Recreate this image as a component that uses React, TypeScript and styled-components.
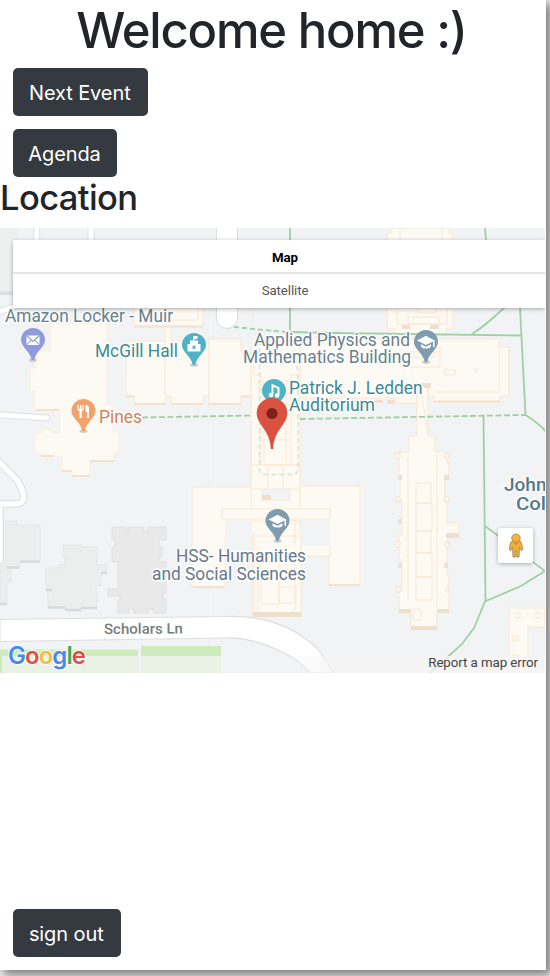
import React from 'react';
import styled, { createGlobalStyle } from 'styled-components';

const GlobalStyle = createGlobalStyle`
  * { box-sizing: border-box; }
  body { margin: 0; background: #fff; overflow: hidden; font-family: Inter, "Liberation Sans", sans-serif; color: #212529; }
`;

const Viewport = styled.div`
  height: 976px;
  width: 550px;
  overflow: hidden;
`;

const Page = styled.main`
  width: 546px;
  height: 970px;
  display: flex;
  flex-direction: column;
  align-items: flex-start;
  background: #fff;
  box-shadow: 4px 4px 10px 2px rgba(0, 0, 0, 0.5);
`;

const Title = styled.h1`
  align-self: stretch;
  margin: 0 0 6px;
  padding-right: 3px;
  text-align: center;
  white-space: nowrap;
  font-size: 49px;
  line-height: 62px;
  font-weight: 500;
  letter-spacing: -1.2px;
`;

const Subtitle = styled.h2`
  margin: 0 0 9px;
  font-size: 34.5px;
  line-height: 42px;
  font-weight: 500;
  letter-spacing: -0.6px;
`;

const Button = styled.button<{ $width: number; $gap?: number }>`
  flex: none;
  width: ${(p) => p.$width}px;
  height: 48px;
  margin: 0 0 ${(p) => p.$gap ?? 0}px 13px;
  padding: 3px 1px 0 0;
  border: 0;
  border-radius: 5px;
  background: #343a3f;
  color: #fff;
  font: 400 20px/45px Inter, "Liberation Sans", sans-serif;
  letter-spacing: -0.1px;
  text-align: center;
  white-space: nowrap;
`;

const MapFrame = styled.section`
  position: relative;
  flex: none;
  width: 545px;
  height: 445px;
  margin-bottom: 236px;
  overflow: hidden;
  background: #f2f3f5;
  font-family: Roboto, sans-serif;
`;

const Canvas = styled.svg`
  display: block;
  width: 545px;
  height: 445px;
`;

const MapTypes = styled.div`
  position: absolute;
  top: 12px;
  left: 13px;
  right: 0;
  border-radius: 2px 0 0 2px;
  box-shadow: 0 1px 4px rgba(0, 0, 0, 0.32);
`;

const MapType = styled.div<{ $active?: boolean }>`
  height: 34px;
  padding-left: 12px;
  background: #fff;
  border-bottom: ${(p) => (p.$active ? '2px solid #e6e6e6' : '0')};
  text-align: center;
  font-size: 13.3px;
  line-height: ${(p) => (p.$active ? 35 : 33)}px;
  letter-spacing: -0.1px;
  font-weight: ${(p) => (p.$active ? 700 : 400)};
  color: ${(p) => (p.$active ? '#000' : '#565656')};
`;

const PegmanButton = styled.div`
  position: absolute;
  left: 498px;
  top: 300px;
  width: 35px;
  height: 35px;
  display: grid;
  place-items: center;
  background: #fff;
  border-radius: 2px;
  box-shadow: 0 1px 4px rgba(0, 0, 0, 0.3);
`;

const Footer = styled.div`
  position: absolute;
  right: 0;
  bottom: 0;
  width: 260px;
  height: 17px;
  padding-right: 7px;
  background: linear-gradient(90deg, rgba(245, 245, 245, 0), rgba(245, 245, 245, 0.75) 50px);
  text-align: right;
  font-size: 13.3px;
  line-height: 14px;
  letter-spacing: -0.07px;
  color: #444;
  white-space: nowrap;
`;

const Label = styled.text.attrs({ lengthAdjust: 'spacingAndGlyphs' })<{ $size?: number; $weight?: number }>`
  font-family: Roboto, sans-serif;
  font-size: ${(p) => p.$size ?? 17.8}px;
  font-weight: ${(p) => p.$weight ?? 400};
  paint-order: stroke;
  stroke: #fff;
  stroke-opacity: 0.9;
  stroke-width: 3px;
  stroke-linejoin: round;
`;

const Logo = styled.text`
  font-family: Inter, sans-serif;
  font-size: 24px;
  font-weight: 600;
  letter-spacing: -0.9px;
  paint-order: stroke;
  stroke: #fff;
  stroke-opacity: 0.85;
  stroke-width: 2px;
  stroke-linejoin: round;
`;

function Pin({ x, y, color, children }: { x: number; y: number; color: string; children: React.ReactNode }) {
  return (
    <g transform={`translate(${x} ${y})`}>
      <ellipse cx="0" cy="20" rx="4" ry="1.8" fill="#777" opacity=".35" />
      <path d="M0-12A12 12 0 0 0-12 0C-12 7-3 11-1.2 20H1.2C3 11 12 7 12 0A12 12 0 0 0 0-12Z" fill={color} />
      {children}
    </g>
  );
}

const CapIcon = () => (
  <g>
    <path d="M0-6.2-9-1.5 0 3 7-.5V5H8.6V-1.5Z" fill="#fff" />
    <path d="M-5 2.2 0 4.7 5 2.2V4.5Q3.5 7 0 6.2Q-3.5 7-5 4.5Z" fill="#fff" />
  </g>
);

function Terrain() {
  return (
    <>
      <rect y="228" width="19" height="65" fill="#eeF0ef" />
      <path d="M0 293H19" stroke="#dfe0e3" strokeWidth="4" />
      <path d="M208.5 308V673" stroke="#ebecee" strokeWidth=".7" />
      <g fill="#eceeed" stroke="#e1e3e3" strokeWidth=".8">
        <path d="M5 521H17V525H40V561H20V567H7V567H0V521Z" />
        <path d="M0 569H11V582H7V604H0Z" />
        <path d="M63 545H81V547H97V565H107V573H101V586H96V592H97V608H81V610H65V607H48V591H46V568H59V565H65V557H63Z" />
        <path fill="#e9e9e9" stroke="#dcdcdc" d="M112 527H126V532H128V527H144V532H148V527H166V540H159V547H162V556H160V562H166V593H163V599H166V613H153V609H148V613H134V609H129V613H118V600H120V596H108V589H118V562H112V547H115V540H112Z" />
      </g>
      <path d="M7 567.5H19M20 561.5H40M48 607.5H65M65 610H81M81 608H97M101 573H107M46 590H52M0 604H7" stroke="#d8dbda" strokeWidth="2.4" />
      <g fill="none" strokeLinejoin="round">
        <path d="M36.7 228V244M91 228V244M-2 312 30 301M-2 414.5 47 418" stroke="#dedfe1" strokeWidth="6.8" strokeLinecap="round" />
        <path d="M227 228V318" stroke="#dedfe1" strokeWidth="22" strokeLinecap="round" />
        <path d="M-4 459 17 480Q32 505 13 504H-3M0 505V562" stroke="#dcdddf" strokeWidth="7.5" />
        <path d="M36.7 228V244M91 228V244M-2 312 30 301M-2 414.5 47 418" stroke="#fff" strokeWidth="5" strokeLinecap="round" />
        <path d="M227 228V318" stroke="#fff" strokeWidth="20" strokeLinecap="round" />
        <path d="M-4 459 17 480Q32 505 13 504H-3M0 505V562" stroke="#fff" strokeWidth="5.5" />
      </g>
      <path d="M0 619.5 225 616.5Q280 614 317 648L334 673H310L298 661Q260 637 225 638L0 641.5Z" fill="#fff" stroke="#dddedf" strokeWidth="1.2" />
      <path d="M0 650H138V673H0ZM141 646H221V673H141Z" fill="#e9f2e5" />
      <path d="M0 649.5H138V656H2V673H0ZM141 646H221V656H141Z" fill="#ceebbb" />
    </>
  );
}

function Buildings() {
  return (
    <>
      <g fill="#fdf9f3" stroke="#fbe7d1" strokeWidth="1">
        <path stroke="#fbf0df" d="M51 324H107V404H113V432H119V452H114V461H90V476H72V471H62V456H53V453H53V456H41V453H35V433H41V430H53V433H60V410H35V391H30V368H35V351H51Z" />
        <path d="M134 308H203V326H171V341H209V339H241V352H251V396H241V404H209V396H203V404H171V396H166V404H134V396H126V341H165V326H134Z" />
        <path d="M391 228H449V233H453V245H447V308H453V329H446V334H395V329H387V308H391V245H387V233H391Z" />
        <path d="M300 339H499V347H509V396H500V402H434V396H428V390H417V403H395V398H300Z" />
        <path d="M417 384H428V436H435V452H447V463H449V479H445V498H447V523H459V536H447V575H449V612H437V629H411V613H399V590H402V560H399V535H402V500H400V479H399V452H409V436H417Z" />
        <path d="M192 487H254V506H300V486H360V585H329V521H300V534H301V616H253V534H225V587H192Z" />
        <path d="M251 352H262V500H290V352H300V521H251Z" />
        <path d="M254 345H300V375H291V465H261V375H254Z" />
        <path d="M251 465H300V489H251ZM222 509H330V519H222ZM301 545H330V556H301ZM254 536H301V616H254ZM261 558H279V604H261ZM279 587H296V603H279Z" />
        <path d="M509 608H545V627H528V673H509Z" />
      </g>
      <path d="M225 520H252V546H225ZM301 520H329V545H301Z" fill="#f2f3f5" />
      <g fill="none" stroke="#fae4ce" strokeWidth=".9">
        <path d="M139 308V320H198V308M165 341V396M209 341V396M253 310V320M264 380V460M286 380V460M268 465V488M283 465V488M261 405H290M261 440H290" />
        <path d="M400 228V245M442 228V245M397 308V324H447V308M408 317H439V324H408ZM418 308V313H436V308M404 352H440V367H400M440 346V352M499 347V392H434M309 357H434V346M445 370H455V375H445ZM475 369H478V372H475Z" />
        <path d="M416 483H431V503H416ZM416 503H432V531H416ZM416 531H431V553H416ZM416 553H432V577H416ZM416 577H432V600H416ZM408 455V600M437 455V608M413 609H421V620H413ZM420 385 428 434" />
        <path d="M515 613H520V618H515ZM536 613H541V618H536ZM513 636H518V641H513ZM513 655H518V660H513Z" />
        <path d="M295 519V545M295 556V610M258 546V615" />
      </g>
      <path d="M134 326.5H203M126 396.5H134M134 404H166M171 404H203M209 404H241M241 396.5H251M35 410H60M41 456H53M62 471H72M72 476H90M90 461H114M192 587H225M329 585H360M434 401.5H500" stroke="#f5e2ce" strokeWidth="1.8" />
      <path d="M411 383H431V388H424V386H411ZM387 400H395V404H387ZM374 400H383V403H374ZM402 325H410V329H402ZM430 325H439V329H430ZM253 612H301V617H253ZM399 609H411V613H399ZM437 609H449V613H437ZM411 626H437V630H411ZM446 533H459V538H446ZM262 495H271V500H262ZM398 475H402V480H398ZM444 475H449V480H444ZM398 519H402V524H398ZM444 563H448V568H444ZM398 563H402V568H398Z" fill="#eedfcf" />
      <g fill="#fdf9f3" stroke="#f5dec4" strokeWidth=".8">
        <path d="M396 453H400V458H396ZM445 453H449V458H445ZM396 497H400V502H396ZM445 497H449V502H445ZM396 542H400V547H396ZM445 542H449V547H445ZM397 587H400V592H397ZM446 587H449V592H446Z" />
      </g>
    </>
  );
}

function Trails() {
  return (
    <g fill="none" stroke="#9fd0a4" strokeWidth="1.8">
      <path d="M290 228V330M485 228 486 240M520 308 525.5 415Q540 424 546 432M472 334Q485 326 505 307M332 333 521 335.5M290 332 340 333M483.5 416 485.5 600 474 628 462 644 430 673M485 526 545 571 521 586 486 601" />
      <path d="M142 417.5 252 415.5M300 419 525 415" strokeDasharray="6 2.5" />
      <path d="M234 327 286 332" strokeDasharray="5 3" />
      <path d="M259.5 332V470Q260 474 265 474.5H294Q298 474 298 468V372L290 332" stroke="#d9ebd8" strokeDasharray="5 3" />
    </g>
  );
}

function Places() {
  return (
    <>
      <Label x="5" y="321.500" textLength="168" fill="#68818f">Amazon Locker - Muir</Label>
      <Label x="95" y="357" textLength="83" fill="#3c8a93">McGill Hall</Label>
      <Label x="254" y="345.500" textLength="156" fill="#68818f">Applied Physics and</Label>
      <Label x="243" y="362.500" textLength="168" fill="#68818f">Mathematics Building</Label>
      <Label x="289" y="394" textLength="133.500" fill="#3c8a93">Patrick J. Ledden</Label>
      <Label x="289" y="411" textLength="86" fill="#3c8a93">Auditorium</Label>
      <Label x="99" y="423" textLength="43" fill="#d58053">Pines</Label>
      <Label x="176" y="562" textLength="130" fill="#68788a">HSS- Humanities</Label>
      <Label x="152" y="579.500" textLength="154" fill="#68788a">and Social Sciences</Label>
      <Label x="504" y="490.500" $size={19} $weight={500} fill="#55798b">John</Label>
      <Label x="516" y="510" textLength="30" $size={19} $weight={500} fill="#55798b">Col</Label>
      <Label x="104" y="634" textLength="79" $size={14.5} $weight={500} fill="#777d7d" transform="rotate(-.4 104 634)">Scholars Ln</Label>
      <Pin x={33} y={340} color="#8f9bdc">
        <path d="M-6.500-4.500H6.500V5H-6.500Z" fill="#fff" />
        <path d="M-6.500-4.500 0 1.500 6.500-4.500M-6.500 5-2 0M6.500 5 2 0" fill="none" stroke="#8f9bdc" strokeWidth="1.100" />
      </Pin>
      <Pin x={194} y={345} color="#4fb3c8">
        <path fillRule="evenodd" d="M-6.500-1H-4V-4.500H-.8V-9H3.500V-6H.5V-4.500H4V-1H6.500V6.500H-6.500ZM-1.500 3.800H1.500V.8H-1.500Z" fill="#fff" />
      </Pin>
      <Pin x={426} y={342} color="#7f9bae"><CapIcon /></Pin>
      <Pin x={83.500} y={411} color="#f2a36d">
        <path d="M-6-6V-2Q-6 0-4-.2V7H-1.700V-.2Q.3 0 .3-2V-6H-1V-2H-2.200V-6H-3.600V-2H-4.700V-6ZM2-6Q5.500-6 5.500-2V7H3.700V1H2Z" fill="#fff" />
      </Pin>
      <Pin x={277.500} y={521} color="#7f9bae"><CapIcon /></Pin>
      <Pin x={274} y={391} color="#4fb3c8">
        <path d="M-1.500 3V-6L4.500-3V4" fill="none" stroke="#fff" strokeWidth="2" />
        <circle cx="-3" cy="4" r="2.300" fill="#fff" /><circle cx="3" cy="4.500" r="2.300" fill="#fff" />
      </Pin>
      <path d="M272 398A15.300 15.300 0 0 0 256.700 413C256.700 425 270.500 430 270.800 449H273.200C273.500 430 287.300 425 287.300 413A15.300 15.300 0 0 0 272 398Z" fill="#da5041" />
      <circle cx="272" cy="413.500" r="5.500" fill="#7a221b" />
      <Logo x="8" y="663.500" textLength="77" lengthAdjust="spacingAndGlyphs">
        <tspan fill="#4b86ed">G</tspan><tspan fill="#df4e42">o</tspan><tspan fill="#f0bd3d">o</tspan>
        <tspan fill="#4b86ed">g</tspan><tspan fill="#4aa45d">l</tspan><tspan fill="#df4e42">e</tspan>
      </Logo>
    </>
  );
}

const Pegman = () => (
  <svg width="16" height="26" viewBox="0 0 16 26">
    <path d="M5 8H11Q13 8 13.500 10L15 16.500 13 17.500 11.500 14.500 11 24H8.700V18H7.300V24H5L4.500 14.500 3 17.500 1 16.500 2.500 10Q3 8 5 8Z" fill="#eeb23c" stroke="#9b8350" strokeWidth=".8" />
    <circle cx="8" cy="5.200" r="4.200" fill="#f2b63e" stroke="#9b8350" strokeWidth=".8" />
    <path d="M5.500 9.200H10.500L8 12.500Z" fill="#df8433" />
  </svg>
);

export default function App() {
  return (
    <Viewport>
      <GlobalStyle />
      <Page>
        <Title>Welcome home :)</Title>
        <Button $width={134.5} $gap={13}>Next Event</Button>
        <Button $width={104}>Agenda</Button>
        <Subtitle>Location</Subtitle>
        <MapFrame>
          <Canvas viewBox="0 228 545 445">
            <Terrain />
            <Buildings />
            <Trails />
            <Places />
          </Canvas>
          <MapTypes>
            <MapType $active>Map</MapType>
            <MapType>Satellite</MapType>
          </MapTypes>
          <PegmanButton><Pegman /></PegmanButton>
          <Footer>Report a map error</Footer>
        </MapFrame>
        <Button $width={107.5}>sign out</Button>
      </Page>
    </Viewport>
  );
}
